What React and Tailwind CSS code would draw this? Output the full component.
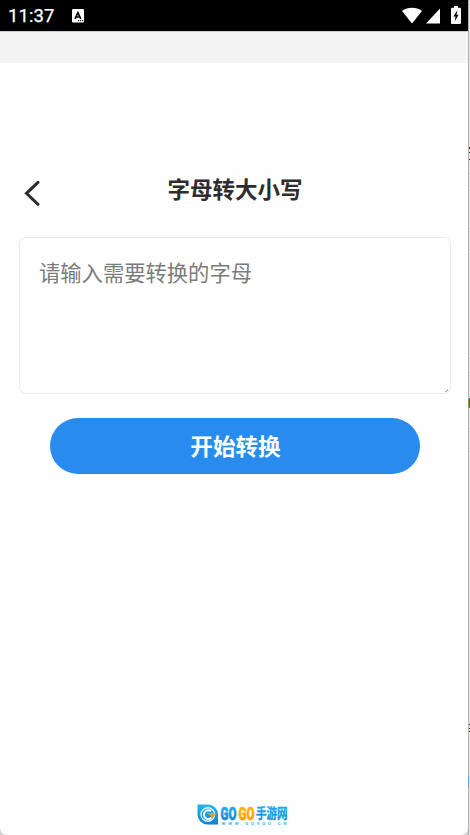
import React from "react";

function StatusBar() {
  return (
    <div className="flex h-[31px] shrink-0 items-center bg-black pl-2 pr-[7px] text-white">
      <span className="mt-[2px] w-[64px] font-['Roboto',sans-serif] text-[18.5px] font-normal leading-none tracking-[0.1px] [-webkit-text-stroke:0.25px_white]">11:37</span>
      <svg className="h-[14px] w-[12px]" viewBox="0 0 12 14">
        <rect width="12" height="13.5" rx="1.2" fill="#fff" />
        <path d="M3 9.800 5.900 3.600 8.800 9.800M4.200 8h3.400" fill="none" stroke="#000" strokeWidth="1.600" />
        <path d="M6 11.700h1.200M8 11.700h1.200M10 11.700h1.200" stroke="#000" strokeWidth="1" />
      </svg>
      <div className="ml-auto flex items-center">
        <svg className="h-[17px] w-[20px]" viewBox="0 0 20 17">
          <path d="M0 4.100C5.500-.3 14.500-.3 20 4.100L10 16.500Z" fill="#fff" />
        </svg>
        <svg className="ml-1 h-[16px] w-[14px]" viewBox="0 0 14 16">
          <path d="M14 .5V15.500H0Z" fill="#fff" />
        </svg>
        <svg className="-mt-px ml-[11px] h-[18px] w-[10px]" viewBox="0 0 10 18">
          <path d="M1 1.800h2V0h4v1.800h2q1 0 1 1V17q0 1-1 1H1q-1 0-1-1V2.800q0-1 1-1Z" fill="#fff" />
          <path d="M6.500 4.200 2.300 10.400h2.200L3.800 15.200 7.600 8.800H5.500Z" fill="#000" />
        </svg>
      </div>
    </div>
  );
}

function Logo() {
  return (
    <svg className="h-[24px] w-[94px]" viewBox="0 0 94 24" role="img">
      <defs>
        <linearGradient id="blue" x1="0" y1="0" x2="0" y2="1">
          <stop offset="0" stopColor="#22b8f0" />
          <stop offset="1" stopColor="#0a7fd2" />
        </linearGradient>
        <linearGradient id="gold" x1="0" y1="0" x2="0" y2="1">
          <stop offset="0" stopColor="#ffc400" />
          <stop offset="1" stopColor="#ff9200" />
        </linearGradient>
      </defs>
      <path d="M.5 1.500H11A10 10 0 0 1 21 11.500V21.500H10.500A10 10 0 0 1 .5 11.500Z" fill="url(#blue)" />
      <circle cx="10.800" cy="11.500" r="6.800" fill="none" stroke="#d8f4ff" strokeWidth="1.400" />
      <path d="M14 8.300A4.300 4.300 0 1 0 14.500 14.500" fill="none" stroke="#fff" strokeWidth="2" />
      <path d="M9.500 10.300H18.700Q18 14 14.500 15.500L14 12.800Z" fill="#ff9c16" />
      <g fontFamily="'Roboto', sans-serif" fontWeight="900" fontSize="19" strokeWidth=".7">
        <text transform="translate(23.600 16.900) scale(.61 1)" fill="url(#blue)" stroke="url(#blue)">GO</text>
        <text transform="translate(41.600 16.900) scale(.61 1)" fill="url(#gold)" stroke="url(#gold)">GO</text>
      </g>
      <text transform="translate(59 15.400) scale(.8 1)" fontFamily="'Noto Sans CJK SC', sans-serif" fontWeight="700" fontSize="13.200" fill="url(#blue)" stroke="url(#blue)" strokeWidth=".3">手游网</text>
      <text x="24.500" y="22" textLength="65" fontFamily="'Roboto', sans-serif" fontWeight="700" fontSize="4.300" fill="#42b8e8">WWW.GO9GO.CN</text>
    </svg>
  );
}

function WindowEdge() {
  return (
    <svg className="h-[835px] w-[2px] shrink-0" viewBox="0 0 2 835" shapeRendering="crispEdges">
      <rect width="2" height="835" fill="#e6e6e6" />
      <rect width="1" height="835" fill="#b2b2b2" />
      <path d="M1 4h1M1 59h1M1 173h1M1 190h1M1 231h1M1 249h1M1 358h1M1 375h1M1 431h1M1 448h1" stroke="#cfcfcf" />
      <path d="M1 147h1v2h-1zM1 152h1v1h-1zM1 159h1v1h-1zM1 724h1v1h-1zM1 728h1v1h-1zM1 731h1v1h-1z" fill="#3d3026" />
      <path d="M1 398h1v10h-1z" fill="#1784ae" />
      <path d="M0 399h1v8h-1z" fill="#a78331" />
      <path d="M0 776h1v12h-1z" fill="#6d9fcc" />
    </svg>
  );
}

export default function App() {
  return (
    <div className="flex h-[835px] w-[470px] overflow-hidden bg-[#d2d2d2] font-['Noto_Sans_CJK_SC',sans-serif]">
      <main className="flex w-[468px] shrink-0 flex-col overflow-hidden rounded-b-[7px] bg-[#fefefe]">
        <StatusBar />
        <div className="h-8 shrink-0 border-t border-[#c9c9c9] bg-[#f4f4f4]" />
        <header className="mt-[105px] flex h-[50px] items-center pl-[24px]">
          <button aria-label="返回" className="-mt-px">
            <svg className="h-[26px] w-[16px]" viewBox="0 0 16 26" fill="none" stroke="#2d2d2d" strokeWidth="3" strokeLinecap="round">
              <path d="M14 2.300 2.500 13.300 14 24.300" />
            </svg>
          </button>
          <h1 className="-mt-[10px] ml-[127.500px] text-[22.5px] font-bold leading-8 text-[#2d2d2d]">字母转大小写</h1>
        </header>
        <div className="ml-[19px] mt-[19px] flex h-[157px] w-[432px] shrink-0 items-end rounded-[7px] border border-[#e9e9e9] bg-white">
          <textarea
            className="h-full w-[425px] resize-none bg-transparent pl-[19px] pt-[18px] text-[21.3px] leading-8 outline-none placeholder:text-[#7b7b7b]"
            placeholder="请输入需要转换的字母"
          />
          <svg className="mb-px h-[3px] w-[3px]" viewBox="0 0 3 3">
            <path d="M3 0V1L1 3H0Z" fill="#777" />
          </svg>
        </div>
        <button className="ml-[50px] mt-[24px] h-[56px] w-[370px] shrink-0 rounded-full bg-[#278cee] pl-px text-[22.6px] font-bold leading-8 text-white">
          开始转换
        </button>
        <footer className="mb-[8px] ml-[197px] mt-auto flex">
          <Logo />
        </footer>
      </main>
      <WindowEdge />
    </div>
  );
}
